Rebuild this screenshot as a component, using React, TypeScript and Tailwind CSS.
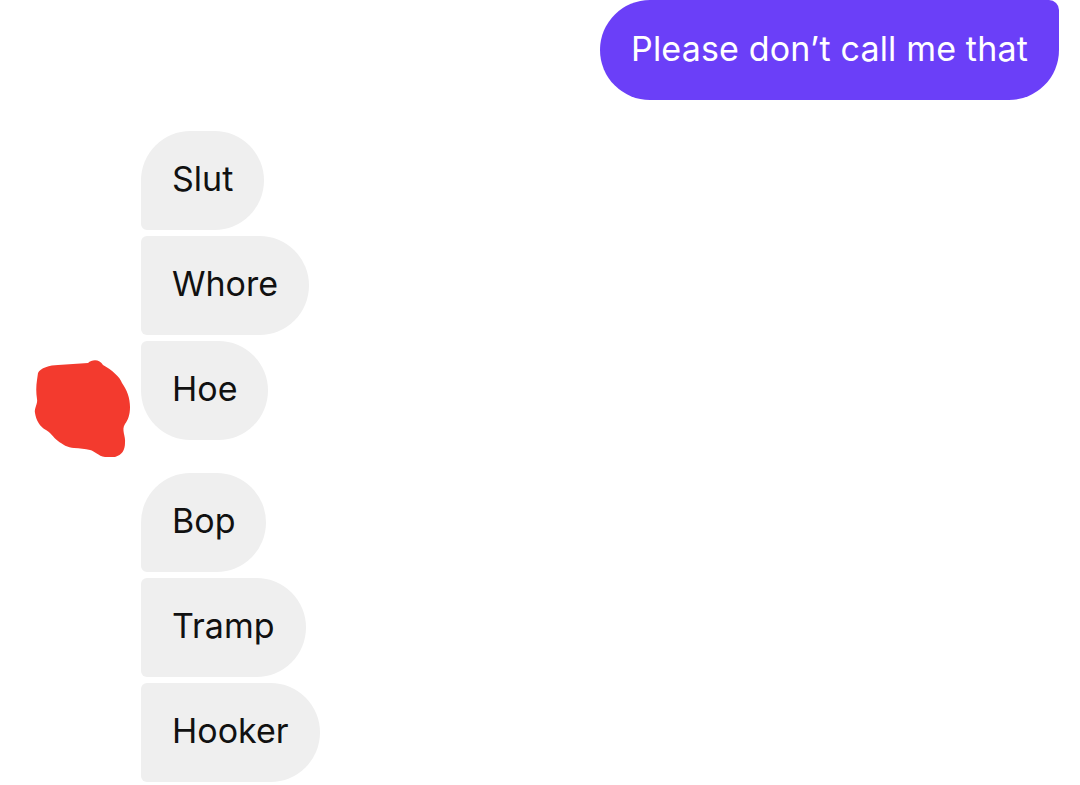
import React from "react";

type Msg = { text: string; shape: string };

const groups: Msg[][] = [
  [
    { text: "Slut", shape: "rounded-[50px] rounded-bl-[6px]" },
    { text: "Whore", shape: "rounded-[50px] rounded-l-[6px]" },
    { text: "Hoe", shape: "rounded-[50px] rounded-tl-[6px]" },
  ],
  [
    { text: "Bop", shape: "rounded-[50px] rounded-bl-[6px]" },
    { text: "Tramp", shape: "rounded-[50px] rounded-l-[6px]" },
    { text: "Hooker", shape: "rounded-[50px] rounded-l-[6px]" },
  ],
];

// red marker scribble drawn over the avatar
function Scribble() {
  return (
    <svg
      className="absolute left-[30px] top-[356px]"
      width="104"
      height="110"
      viewBox="30 356 104 110"
    >
      <path
        fill="#f33a2e"
        d="M38,373 C40,368 50,365 58,365 L88,363 C92,359 100,359 103,365 C112,370 120,377 122,383 C127,390 130,398 130,407 C130,415 128,420 125,424 C121,430 126,436 125,443 C125,450 122,455 115,457 L105,457 C98,456 95,451 90,450 C85,449 80,448 74,448 C68,448 62,444 58,441 C53,437 50,432 46,430 C40,427 36,420 35,413 C34,408 38,404 37,399 C36,393 36,386 37,380 Z"
      />
    </svg>
  );
}

export default function App() {
  return (
    <div
      className="relative w-[1080px] h-[785px] overflow-hidden bg-white"
      style={{ fontFamily: "Inter, 'Noto Sans', sans-serif" }}
    >
      <div className="flex justify-end pr-[21px]">
        <div className="h-[100px] flex items-center pl-[31px] pr-[31px] pb-[4px] bg-[#6b3ff8] text-white text-[34px] tracking-[0.005em] rounded-[50px] rounded-tr-[10px]">
          Please don’t call me that
        </div>
      </div>

      <div className="flex flex-col gap-[33px] mt-[31px] pl-[141px]">
        {groups.map((g, i) => (
          <div key={i} className="flex flex-col items-start gap-[6px]">
            {g.map((m) => (
              <div
                key={m.text}
                className={
                  "h-[99px] flex items-center px-[31px] pb-[4px] bg-[#efefef] text-[#111111] text-[34px] " +
                  m.shape
                }
              >
                {m.text}
              </div>
            ))}
          </div>
        ))}
      </div>

      <Scribble />
    </div>
  );
}
